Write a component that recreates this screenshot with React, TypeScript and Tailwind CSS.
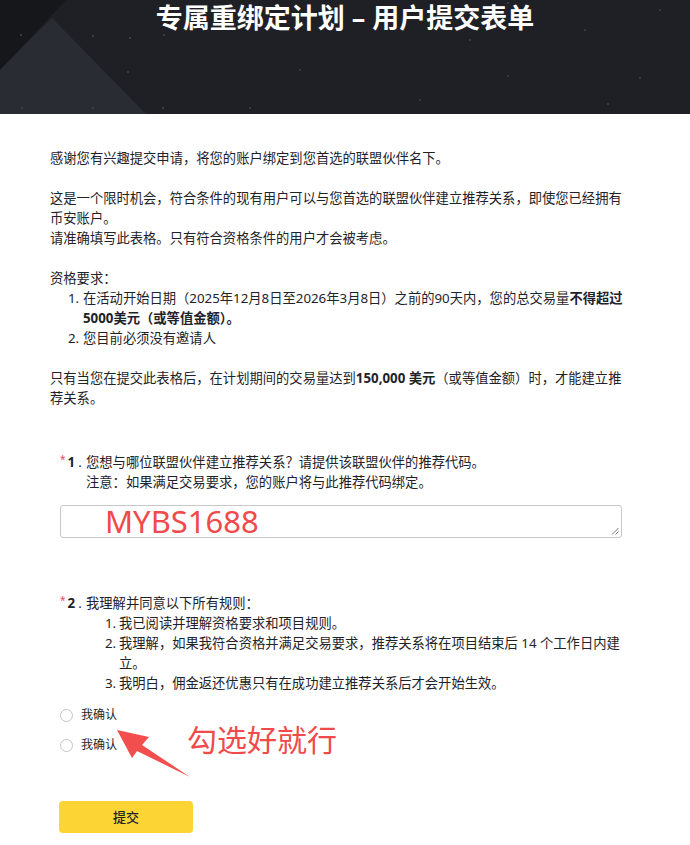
import React from "react";

const FONT = { fontFamily: '"Noto Sans", "Noto Sans CJK SC", sans-serif' };

function Header() {
  const stars: [number, number][] = [
    [21, 35], [93, 36], [130, 38], [164, 35], [128, 72], [163, 108], [93, 108], [22, 108],
    [508, 3], [585, 30], [640, 78], [508, 76], [420, 100], [300, 70], [250, 108], [660, 10],
    [608, 104], [470, 40],
  ];
  return (
    <div className="relative h-[114px] overflow-hidden bg-[#1f2025]">
      <svg className="absolute inset-0" width="690" height="114" viewBox="0 0 690 114">
        <polygon points="0,0 66,0 0,70" fill="#16171b" />
        <polygon points="52,18 146,114 0,114 0,70" fill="#2a2c33" />
        {stars.map(([x, y], i) => (
          <circle key={i} cx={x} cy={y} r="1" fill="#41434b" />
        ))}
      </svg>
      <h1 className="relative pt-[4px] text-center text-[27px] font-bold leading-[28px] text-white">
        专属重绑定计划 – 用户提交表单
      </h1>
    </div>
  );
}

function Star() {
  return <span className="relative top-[-4px] text-[10px] leading-none text-[#f6465d]">*</span>;
}

function Radio({ label }: { label: string }) {
  return (
    <div className="flex h-[20px] items-center">
      <span className="h-[13px] w-[13px] rounded-full border border-[#c4c4c4] bg-white" />
      <span className="ml-[8px] text-[12px] leading-[20px] text-[#1e2329]">{label}</span>
    </div>
  );
}

function QPrefix({ n }: { n: string }) {
  return (
    <div className="w-[26px] shrink-0 whitespace-nowrap">
      <Star />
      <b className="ml-[2px]">{n}</b>
      <span className="ml-[3px]">.</span>
    </div>
  );
}

export default function App() {
  return (
    <div className="relative min-h-[845px] bg-white text-[#1e2329]" style={FONT}>
      <Header />
      <div className="pl-[50px] pr-[58px] pt-[34px] text-[13.3px] leading-[20px]">
        <p>感谢您有兴趣提交申请，将您的账户绑定到您首选的联盟伙伴名下。</p>
        <p className="mt-[20px]">
          这是一个限时机会，符合条件的现有用户可以与您首选的联盟伙伴建立推荐关系，即使您已经拥有币安账户。
        </p>
        <p>请准确填写此表格。只有符合资格条件的用户才会被考虑。</p>
        <p className="mt-[20px]">资格要求：</p>
        <div className="pl-[18px]">
          <div className="flex">
            <span className="w-[15px] shrink-0">1.</span>
            <span>
              在活动开始日期（2025年12月8日至2026年3月8日）之前的90天内，您的总交易量
              <b>不得超过5000美元（或等值金额）。</b>
            </span>
          </div>
          <div className="flex">
            <span className="w-[15px] shrink-0">2.</span>
            <span>您目前必须没有邀请人</span>
          </div>
        </div>
        <p className="mt-[20px]">
          只有当您在提交此表格后，在计划期间的交易量达到<b>150,000 美元</b>（或等值金额）时，才能建立推荐关系。
        </p>

        <div className="mt-[44px] pl-[10px] pr-[10px]">
          <div className="flex">
            <QPrefix n="1" />
            <div>
              <p>您想与哪位联盟伙伴建立推荐关系？请提供该联盟伙伴的推荐代码。</p>
              <p>注意：如果满足交易要求，您的账户将与此推荐代码绑定。</p>
            </div>
          </div>
          <div className="relative mt-[13px] h-[33px] rounded-[3px] border border-[#c8c8c8] pl-[44px]">
            <span
              className="block text-[31px] leading-[31px] text-[#f04a4a]"
              style={{ fontFamily: '"Noto Sans", sans-serif' }}
            >
              MYBS1688
            </span>
            <svg className="absolute bottom-[2px] right-[2px]" width="8" height="8" viewBox="0 0 8 8">
              <line x1="7.5" y1="1" x2="1" y2="7.5" stroke="#777" strokeWidth="1" />
              <line x1="7.5" y1="4.5" x2="4.5" y2="7.5" stroke="#777" strokeWidth="1" />
            </svg>
          </div>

          <div className="mt-[55px] flex">
            <QPrefix n="2" />
            <div className="min-w-0 flex-1">
              <p>我理解并同意以下所有规则：</p>
              <div className="pl-[19px]">
                <div className="flex">
                  <span className="w-[14px] shrink-0">1.</span>
                  <span>我已阅读并理解资格要求和项目规则。</span>
                </div>
                <div className="flex">
                  <span className="w-[14px] shrink-0">2.</span>
                  <span>我理解，如果我符合资格并满足交易要求，推荐关系将在项目结束后 14 个工作日内建立。</span>
                </div>
                <div className="flex">
                  <span className="w-[14px] shrink-0">3.</span>
                  <span>我明白，佣金返还优惠只有在成功建立推荐关系后才会开始生效。</span>
                </div>
              </div>
            </div>
          </div>

          <div className="mt-[12px] flex flex-col gap-[10px]">
            <Radio label="我确认" />
            <Radio label="我确认" />
          </div>
        </div>

        <button className="ml-[9px] mt-[46px] flex h-[32px] w-[134px] items-center justify-center rounded-[4px] bg-[#fcd535] text-[13px] font-medium text-[#1e2329]">
          提交
        </button>
      </div>

      <div className="pointer-events-none absolute left-[187px] top-[720px] text-[30px] leading-[36px] text-[#f04a4a]" style={{ fontFamily: '"Noto Sans CJK SC", sans-serif' }}>
        勾选好就行
      </div>
      <svg className="pointer-events-none absolute left-0 top-0" width="690" height="845" viewBox="0 0 690 845">
        <polygon
          points="117,730 149,737 142,745 190,777 137,751 132,758"
          fill="#f24e4e"
        />
      </svg>
    </div>
  );
}
